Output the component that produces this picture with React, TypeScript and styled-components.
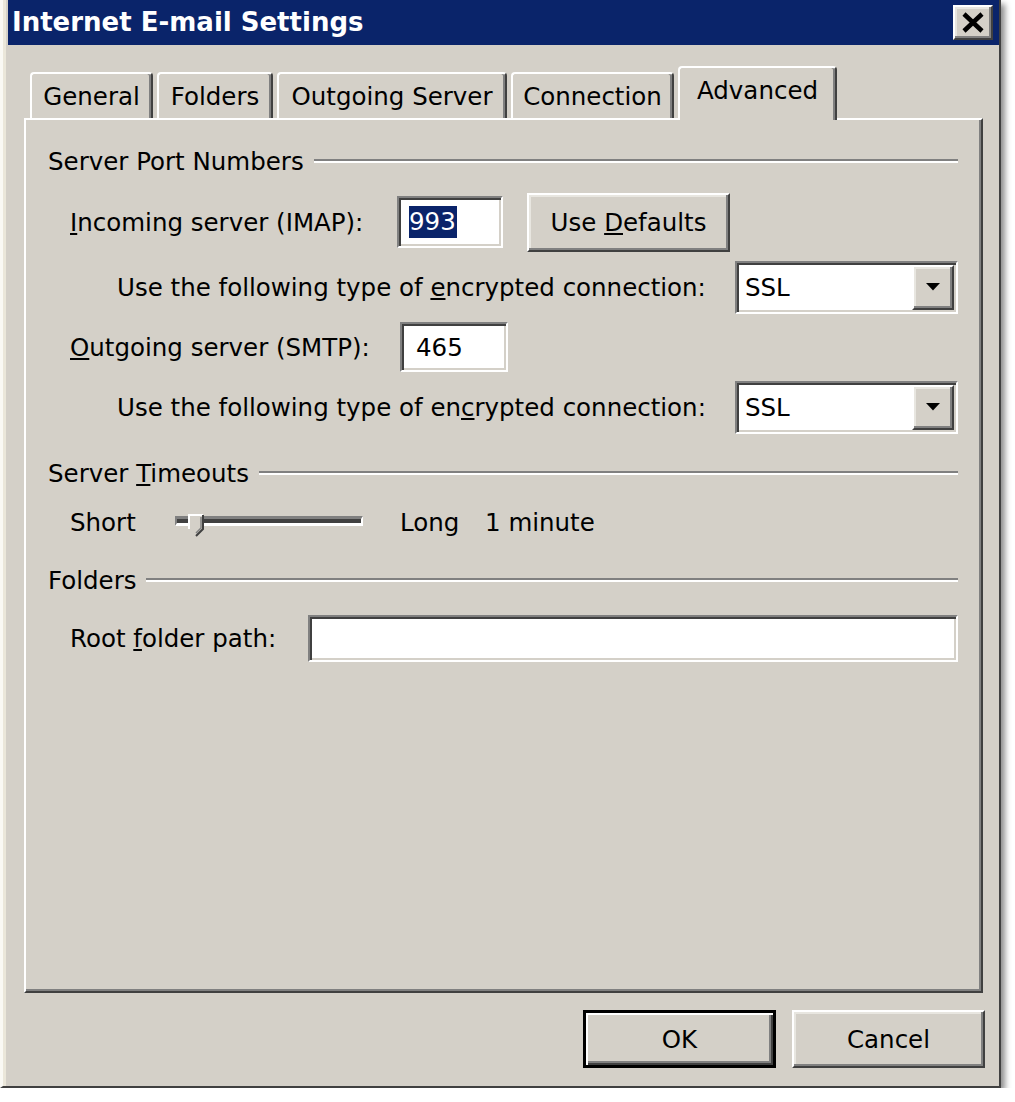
import styled, { createGlobalStyle } from "styled-components";

const GlobalStyle = createGlobalStyle`
  html, body {
    margin: 0;
    padding: 0;
    background: #fff;
  }
  body {
    font-family: "DejaVu Sans", "Liberation Sans", sans-serif;
    font-size: 24.5px;
    color: #000;
  }
`;

const tabs = [
  { title: "General", width: 123 },
  { title: "Folders", width: 116 },
  { title: "Outgoing Server", width: 230 },
  { title: "Connection", width: 163 },
  { title: "Advanced", width: 159 },
];

export default function App() {
  return (
    <>
      <GlobalStyle />
      <Window>
        <TitleBar>
          <Title>Internet E-mail Settings</Title>
          <CloseButton>
            <svg width="24" height="21" viewBox="0 0 24 21">
              <path d="M3 2 L21 19 M21 2 L3 19" stroke="#000" strokeWidth="4.5" />
            </svg>
          </CloseButton>
        </TitleBar>

        <Body>
          <TabRow>
            {tabs.map((tab) => (
              <Tab key={tab.title} $width={tab.width} $active={tab.title === "Advanced"}>
                {tab.title}
              </Tab>
            ))}
          </TabRow>

          <Panel>
            <Section $top={20}>
              <SectionLabel>Server Port Numbers</SectionLabel>
              <Rule />
            </Section>

            <Row $top={10} $h={60}>
              <Label $width={327}>
                <u>I</u>ncoming server (IMAP):
              </Label>
              <TextBox $width={106} $height={52}>
                <Selected>993</Selected>
              </TextBox>
              <Button $width={203} $height={59} style={{ marginLeft: 24 }}>
                <span>
                  Use <u>D</u>efaults
                </span>
              </Button>
            </Row>

            <EncRow $top={8}>
              <span>
                Use the following type of <u>e</u>ncrypted connection:
              </span>
              <Select>
                <SelectText>SSL</SelectText>
                <DropButton>
                  <svg width="14" height="8" viewBox="0 0 14 8">
                    <polygon points="0,0 14,0 7,7.5" fill="#000" />
                  </svg>
                </DropButton>
              </Select>
            </EncRow>

            <Row $top={6} $h={54}>
              <Label $width={330}>
                <u>O</u>utgoing server (SMTP):
              </Label>
              <TextBox $width={108} $height={50}>
                <InputText>465</InputText>
              </TextBox>
            </Row>

            <EncRow $top={6}>
              <span>
                Use the following type of en<u>c</u>rypted connection:
              </span>
              <Select>
                <SelectText>SSL</SelectText>
                <DropButton>
                  <svg width="14" height="8" viewBox="0 0 14 8">
                    <polygon points="0,0 14,0 7,7.5" fill="#000" />
                  </svg>
                </DropButton>
              </Select>
            </EncRow>

            <Section $top={18}>
              <SectionLabel>
                Server <u>T</u>imeouts
              </SectionLabel>
              <Rule />
            </Section>

            <Row $top={8} $h={40}>
              <Label $width={105}>Short</Label>
              <Slider>
                <Thumb width="16" height="23" viewBox="0 0 16 23">
                  <polygon points="1,1 15,1 15,15 8,22 1,15" fill="#d4d0c8" />
                  <polyline points="1,15 1,1 15,1" fill="none" stroke="#fff" strokeWidth="2" />
                  <polyline points="15,1 15,15 8,22" fill="none" stroke="#404040" strokeWidth="2" />
                  <polyline points="13,3 13,14 8,19" fill="none" stroke="#808080" strokeWidth="1.5" />
                </Thumb>
              </Slider>
              <Label $width={85} style={{ marginLeft: 37 }}>
                Long
              </Label>
              <span>1 minute</span>
            </Row>

            <Section $top={17}>
              <SectionLabel>Folders</SectionLabel>
              <Rule />
            </Section>

            <Row $top={13} $h={48}>
              <Label $width={238}>
                Root <u>f</u>older path:
              </Label>
              <TextBox $height={47} style={{ flex: 1 }} />
            </Row>
          </Panel>

          <Footer>
            <Button $width={193} $height={58} $default>
              OK
            </Button>
            <Button $width={193} $height={58}>
              Cancel
            </Button>
          </Footer>
        </Body>
      </Window>
    </>
  );
}

const Window = styled.div`
  width: 1001px;
  height: 1088px;
  box-sizing: border-box;
  background: #d4d0c8;
  border-left: 3px solid #faf9f4;
  border-right: 2px solid #404040;
  border-bottom: 2px solid #404040;
  padding-left: 5px;
  box-shadow: inset 3px 0 0 #ebe7da, 4px 4px 6px rgba(0, 0, 0, 0.45);
  display: flex;
  flex-direction: column;
`;

const TitleBar = styled.div`
  height: 45px;
  flex-shrink: 0;
  background: #0a246a;
  display: flex;
  align-items: center;
  justify-content: space-between;
  padding: 0 6px 0 4px;
`;

const Title = styled.div`
  font-family: "DejaVu Sans", sans-serif;
  font-weight: bold;
  font-size: 26px;
  color: #fff;
  margin-top: -2px;
`;

const raised = `
  border: 2px solid;
  border-color: #fff #404040 #404040 #fff;
  box-shadow: inset -2px -2px 0 #808080, inset 2px 2px 0 #e8e6e0;
  background: #d4d0c8;
`;

const sunken = `
  border: 2px solid;
  border-color: #808080 #fff #fff #808080;
  box-shadow: inset 2px 2px 0 #404040, inset -2px -2px 0 #d4d0c8;
  background: #fff;
`;

const CloseButton = styled.div`
  ${raised}
  box-sizing: border-box;
  width: 40px;
  height: 35px;
  display: flex;
  align-items: center;
  justify-content: center;
`;

const Body = styled.div`
  flex: 1;
  display: flex;
  flex-direction: column;
  padding: 21px 16px 0 16px;
`;

const TabRow = styled.div`
  display: flex;
  align-items: flex-end;
  gap: 4px;
  height: 54px;
  padding-left: 6px;
  margin-bottom: -2px;
  position: relative;
  z-index: 1;
`;

const Tab = styled.div<{ $width: number; $active?: boolean }>`
  box-sizing: border-box;
  width: ${(p) => p.$width}px;
  height: ${(p) => (p.$active ? 54 : 46)}px;
  background: #d4d0c8;
  border: 2px solid;
  border-bottom: none;
  border-color: #fff #404040 transparent #fff;
  border-radius: 4px 4px 0 0;
  box-shadow: inset -2px 0 0 #808080;
  display: flex;
  align-items: center;
  justify-content: center;
  padding-bottom: ${(p) => (p.$active ? 8 : 0)}px;
  margin-bottom: ${(p) => (p.$active ? 0 : 2)}px;
`;

const Panel = styled.div`
  box-sizing: border-box;
  height: 875px;
  border: 2px solid;
  border-color: #fff #404040 #404040 #fff;
  box-shadow: inset -2px -2px 0 #808080;
  padding: 0 23px 0 22px;
  display: flex;
  flex-direction: column;
`;

const Section = styled.div<{ $top: number }>`
  height: 42px;
  margin-top: ${(p) => p.$top}px;
  display: flex;
  align-items: center;
`;

const SectionLabel = styled.span`
  white-space: nowrap;
`;

const Rule = styled.div`
  flex: 1;
  margin-left: 10px;
  border-top: 2px solid #808080;
  border-bottom: 2px solid #fff;
`;

const Row = styled.div<{ $top: number; $h: number }>`
  height: ${(p) => p.$h}px;
  margin-top: ${(p) => p.$top}px;
  padding-left: 22px;
  display: flex;
  align-items: center;
`;

const EncRow = styled.div<{ $top: number }>`
  height: 54px;
  margin-top: ${(p) => p.$top}px;
  padding-left: 69px;
  display: flex;
  align-items: center;
  justify-content: space-between;
`;

const Label = styled.span<{ $width: number }>`
  flex-shrink: 0;
  width: ${(p) => p.$width}px;
  white-space: nowrap;
`;

const TextBox = styled.div<{ $width?: number; $height: number }>`
  ${sunken}
  box-sizing: border-box;
  width: ${(p) => (p.$width ? `${p.$width}px` : "auto")};
  height: ${(p) => p.$height}px;
  display: flex;
  align-items: center;
  padding-left: 10px;
`;

const Selected = styled.span`
  background: #0a246a;
  color: #fff;
  line-height: 32px;
  padding: 0 1px 0 0;
`;

const InputText = styled.span`
  padding-left: 4px;
`;

const Button = styled.div<{ $width: number; $height: number; $default?: boolean }>`
  ${raised}
  box-sizing: border-box;
  width: ${(p) => p.$width}px;
  height: ${(p) => p.$height}px;
  display: flex;
  align-items: center;
  justify-content: center;
  white-space: nowrap;
  ${(p) =>
    p.$default
      ? `
    border: 3px solid #000;
    box-shadow: inset 2px 2px 0 #fff, inset -2px -2px 0 #404040, inset -4px -4px 0 #808080;
  `
      : ""}
`;

const Select = styled.div`
  ${sunken}
  box-sizing: border-box;
  width: 223px;
  height: 53px;
  display: flex;
  align-items: center;
  justify-content: space-between;
  padding: 0 2px 0 8px;
`;

const SelectText = styled.span``;

const DropButton = styled.div`
  ${raised}
  box-sizing: border-box;
  width: 42px;
  height: 45px;
  display: flex;
  align-items: center;
  justify-content: center;
`;

const Slider = styled.div`
  position: relative;
  box-sizing: border-box;
  width: 188px;
  height: 10px;
  margin-top: -3px;
  background: #404040;
  border-top: 3px solid #808080;
  border-bottom: 3px solid #fff;
  border-left: 2px solid #808080;
  border-right: 2px solid #fff;
`;

const Thumb = styled.svg`
  position: absolute;
  left: 11px;
  top: -5px;
`;

const Footer = styled.div`
  display: flex;
  justify-content: flex-end;
  gap: 16px;
  padding-top: 17px;
  margin-right: -2px;
`;
